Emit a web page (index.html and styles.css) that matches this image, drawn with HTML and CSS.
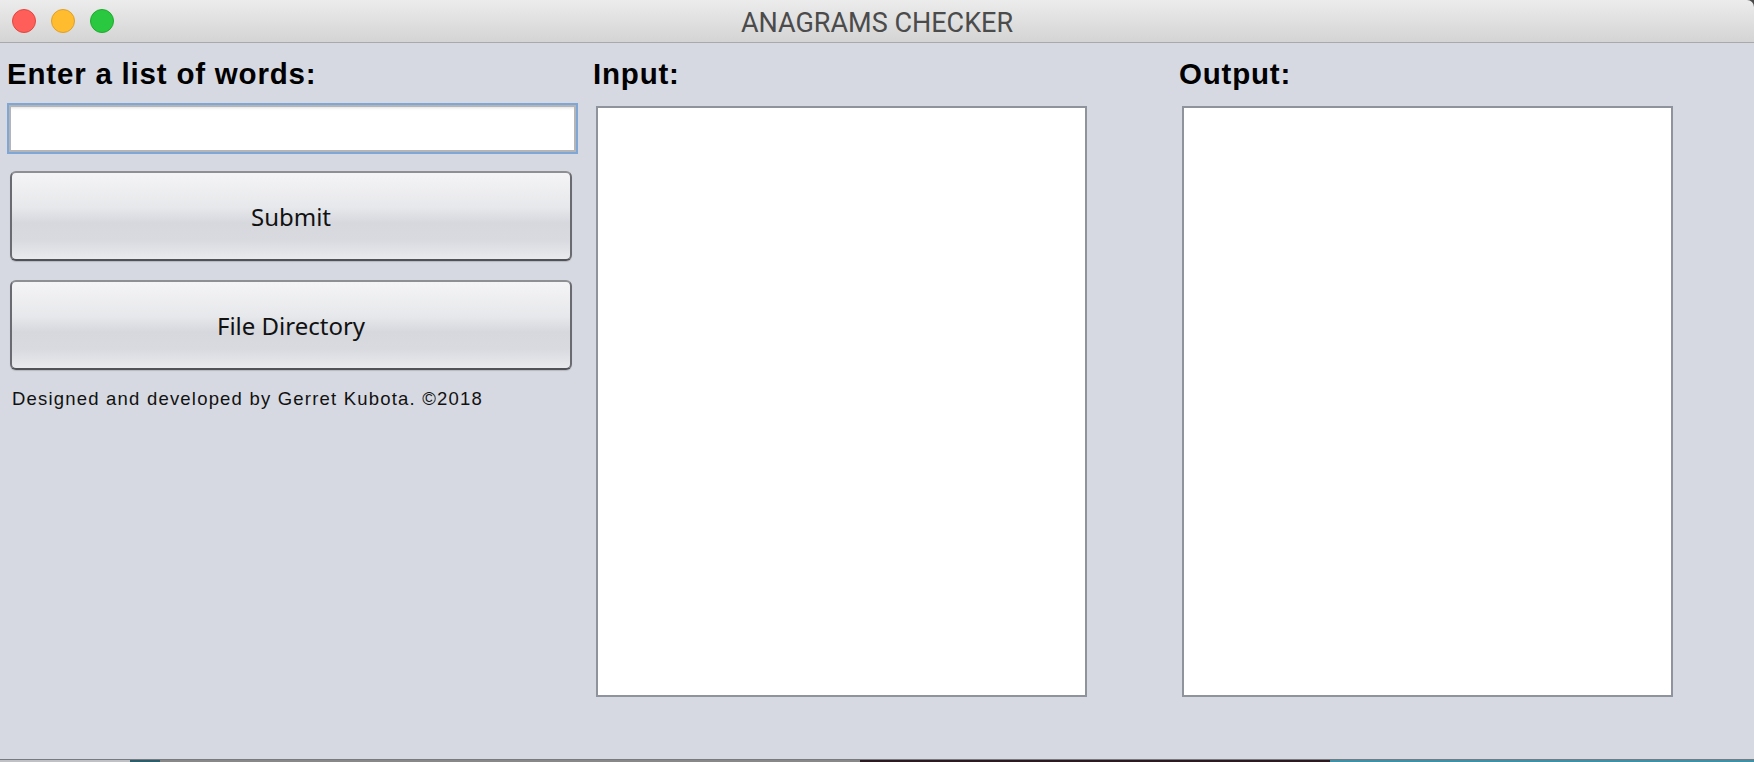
FILE: index.html
```html
<!DOCTYPE html>
<html lang="en">
<head>
<meta charset="utf-8">
<title>ANAGRAMS CHECKER</title>
<link rel="stylesheet" href="styles.css">
</head>
<body>
<div class="window">
  <header class="titlebar">
    <div class="lights">
      <span class="light red"></span>
      <span class="light yellow"></span>
      <span class="light green"></span>
    </div>
    <div class="title">ANAGRAMS CHECKER</div>
    <div class="spacer"></div>
  </header>
  <main class="content">
    <section class="col col-left">
      <h2 class="label">Enter a list of words:</h2>
      <div class="field"></div>
      <div class="btn btn-first">Submit</div>
      <div class="btn btn-second">File Directory</div>
      <p class="credits">Designed and developed by Gerret Kubota. ©2018</p>
    </section>
    <section class="col col-mid">
      <h2 class="label">Input:</h2>
      <div class="area"></div>
    </section>
    <section class="col col-right">
      <h2 class="label">Output:</h2>
      <div class="area"></div>
    </section>
  </main>
  <div class="desk"></div>
</div>
</body>
</html>
```

FILE: styles.css
```css
html, body {
  margin: 0;
  padding: 0;
  background: #4a4a4a;
}
.window {
  width: 1754px;
  height: 762px;
  overflow: hidden;
  display: flex;
  flex-direction: column;
  border-top-right-radius: 7px;
}
.titlebar {
  height: 40px;
  padding-top: 2px;
  border-bottom: 1px solid #a9a9a9;
  background: linear-gradient(#ececec, #d4d4d4);
  display: grid;
  grid-template-columns: 1fr auto 1fr;
  align-items: start;
  flex: none;
}
.lights {
  display: flex;
  gap: 15px;
  padding-left: 12px;
  padding-top: 7px;
}
.light {
  width: 22px;
  height: 22px;
  border-radius: 50%;
  display: block;
}
.red { background: #ff5f58; border: 1px solid #e2463f; }
.yellow { background: #ffbc2f; border: 1px solid #dfa026; }
.green { background: #29c840; border: 1px solid #1dac2c; }
.title {
  font-family: Roboto, "Liberation Sans", sans-serif;
  font-size: 27px;
  line-height: 40px;
  color: #4b4b4b;
  padding-top: 1px;
}
.content {
  flex: none;
  height: 716px;
  background: #d6d9e1;
  border-bottom: 1px solid #777a80;
  display: flex;
  align-items: flex-start;
}
.desk {
  flex: none;
  height: 2px;
  background: linear-gradient(90deg, #bfc1c5 0 130px, #2e5d6a 130px 160px, #888 160px 860px, #2b1b20 860px 1330px, #3f8fa5 1330px);
}
.col {
  display: flex;
  flex-direction: column;
}
.col-left {
  margin-left: 7px;
  width: 571px;
}
.col-mid {
  margin-left: 15px;
  width: 494px;
}
.col-right {
  margin-left: 92px;
  width: 494px;
}
.label {
  margin: 14px 0 0 0;
  font-family: "Liberation Sans", Arial, sans-serif;
  font-weight: bold;
  font-size: 29.5px;
  letter-spacing: 0.8px;
  line-height: 34px;
  color: #000;
}
.field {
  margin-top: 12px;
  width: 571px;
  height: 51px;
  box-sizing: border-box;
  background: #fff;
  border: 2px solid #7ea7d5;
  box-shadow: inset 0 0 0 2px #b5b5b7, inset 0 5px 3px -2px rgba(0,0,0,0.12);
}
.btn {
  margin-left: 3px;
  width: 562px;
  height: 90px;
  box-sizing: border-box;
  border: 2px solid #6a6b70;
  border-top-color: #8e8f93;
  border-bottom-color: #515257;
  border-radius: 6px;
  background: linear-gradient(#f4f4f6 0%, #e7e8eb 40%, #d6d8de 58%, #d8dae0 78%, #e9eaed 100%);
  box-shadow: 0 1px 1px rgba(0,0,0,0.15);
  display: flex;
  align-items: center;
  justify-content: center;
  font-family: "Noto Sans", "DejaVu Sans", sans-serif;
  font-size: 24px;
  color: #111;
}
.btn-first { margin-top: 17px; }
.btn-second { margin-top: 19px; }
.credits {
  margin: 18px 0 0 5px;
  font-family: "Liberation Sans", Arial, sans-serif;
  font-size: 18.5px;
  letter-spacing: 1.2px;
  line-height: 22px;
  color: #111;
}
.area {
  margin-top: 15px;
  margin-left: 3px;
  width: 491px;
  height: 591px;
  box-sizing: border-box;
  background: #fff;
  border: 2px solid #8f939c;
}
```
